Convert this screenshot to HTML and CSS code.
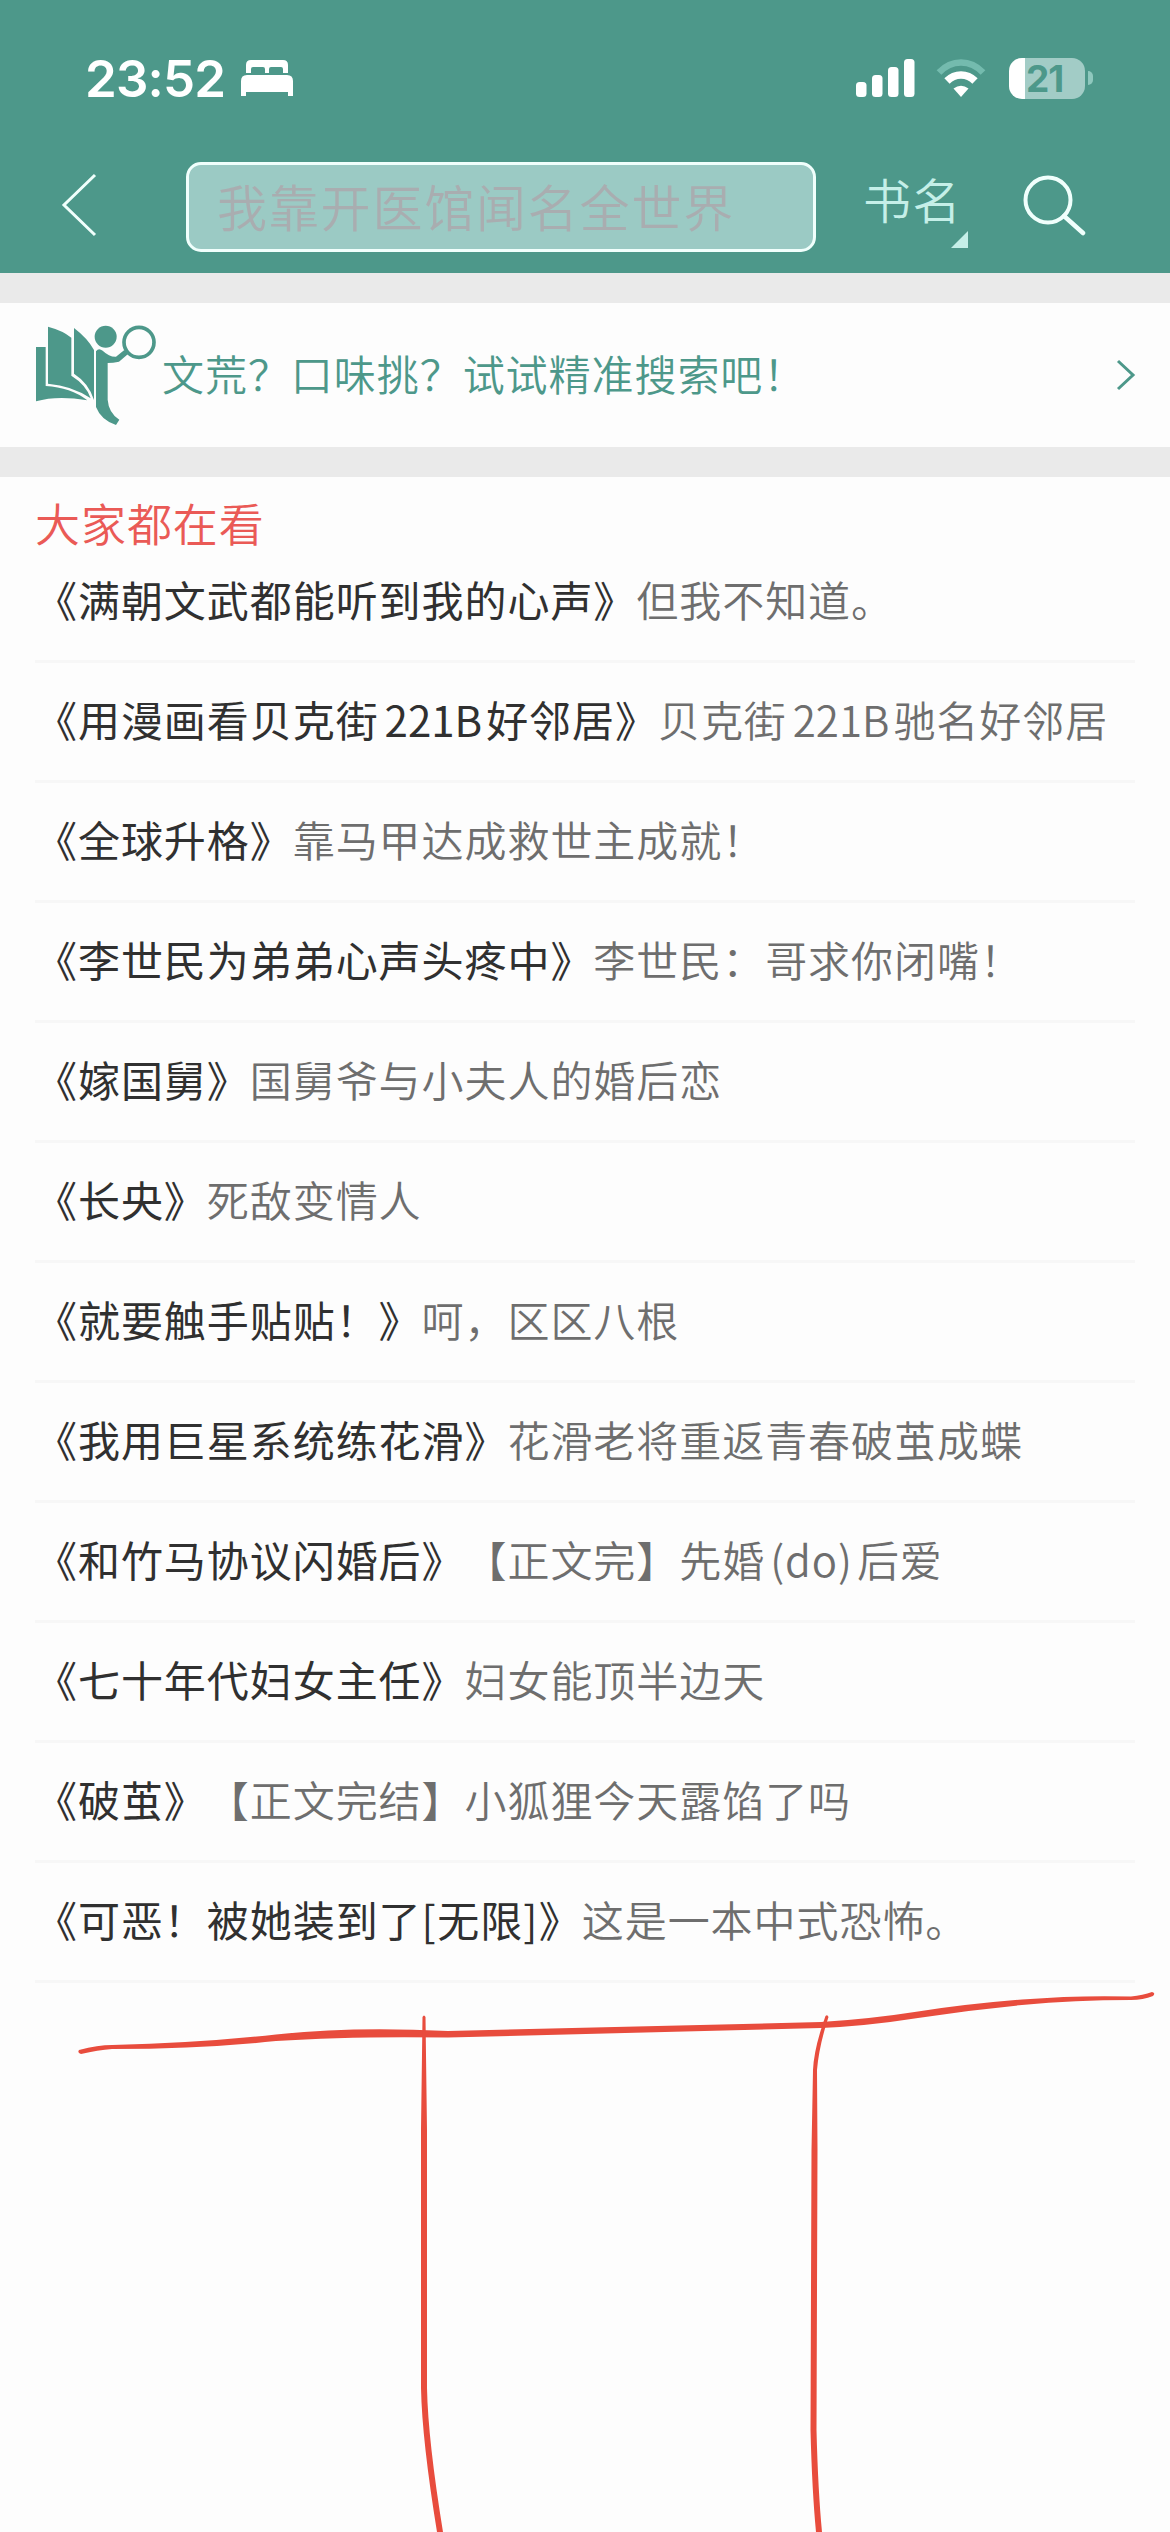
FILE: index.html
```html
<!DOCTYPE html>
<html lang="zh-CN">
<head>
    <meta charset="utf-8">
    <title>搜索</title>
    <link rel="stylesheet" href="styles.css">
</head>
<body>
    <div class="header">
        <div class="status">
            <span class="time">23:52</span>
            <svg class="bed" width="52" height="36" viewBox="0 0 52 36" fill="#fff">
                <path d="M5 13V5q0-5 5-5h32q5 0 5 5v8h-5V9q0-2-2-2H30q-2 0-2 2v4h-4V9q0-2-2-2H12q-2 0-2 2v4z"/>
                <path d="M0 36V21q0-6 6-6h40q6 0 6 6v15h-5v-4H5v4z"/>
            </svg>
            <svg class="signal" width="60" height="38" viewBox="0 0 60 38" fill="#fff">
                <rect x="0" y="23" width="10.500" height="15" rx="3.500"/>
                <rect x="16" y="16" width="10.500" height="22" rx="3.500"/>
                <rect x="32" y="8" width="10.500" height="30" rx="3.500"/>
                <rect x="48" y="0" width="10.500" height="38" rx="3.500"/>
            </svg>
            <svg class="wifi" width="50" height="38" viewBox="0 0 50 38">
                <path d="M3 13.500Q12.500 3.500 25 3.500T47 13.500" fill="none" stroke="#74bbae" stroke-width="6.500"/>
                <path d="M11 22Q17 16 25 16T39 22" fill="none" stroke="#fff" stroke-width="7.500"/>
                <path d="M25 38l-7.500-8.500q7.500-5.500 15 0z" fill="#fff"/>
            </svg>
            <div class="battery"><span>21</span></div>
            <div class="nub"></div>
        </div>
        <div class="nav">
            <svg class="back" width="36" height="64" viewBox="0 0 36 64" fill="none" stroke="#f0fffc" stroke-width="3">
                <path d="M34 2L3 32l31 30"/>
            </svg>
            <div class="search-box">我靠开医馆闻名全世界</div>
            <div class="type">书名</div>
            <svg class="search" width="64" height="62" viewBox="0 0 64 62" fill="none" stroke="#f0fffc" stroke-width="4">
                <ellipse cx="25" cy="26" rx="22.500" ry="22.500"/>
                <path d="M41 42l19 17" stroke-width="4.500" stroke-linecap="round"/>
            </svg>
        </div>
    </div>

    <div class="promo">
        <svg width="120" height="100" viewBox="108 75 360 300" fill="#4d988a">
            <path d="M108 141h29v117q75 4 125 43q-90-16-154 3z"/>
            <path d="M144 80q45 12 70 33v114q45 28 58 68q-55-38-128-44z"/>
            <path d="M222 84q40 30 60 66v150q-15-50-60-79z"/>
            <circle cx="317" cy="110" r="33"/>
            <path d="M288 154q8-12 20-2 20 19 40 18l25-20 12 11-28 24q-18 4-34 4v110q3 40 35 60l-10 16q-45-15-60-54z"/>
            <circle cx="417" cy="127" r="45" fill="none" stroke="#4d988a" stroke-width="11"/>
        </svg>
        <span class="promo-text">文荒？口味挑？试试精准搜索吧！</span>
        <svg class="arrow" width="20" height="32" viewBox="0 0 20 32" fill="none" stroke="#4d988a" stroke-width="3">
            <path d="M2 2l15 14L2 30"/>
        </svg>
    </div>

    <div class="hot">
        <h2>大家都在看</h2>
        <div class="row"><b>《满朝文武都能听到我的心声》</b>但我不知道。</div>
        <div class="row"><b>《用漫画看贝克街<i>221B</i>好邻居》</b>贝克街<i>221B</i>驰名好邻居</div>
        <div class="row"><b>《全球升格》</b>靠马甲达成救世主成就！</div>
        <div class="row"><b>《李世民为弟弟心声头疼中》</b>李世民：哥求你闭嘴！</div>
        <div class="row"><b>《嫁国舅》</b>国舅爷与小夫人的婚后恋</div>
        <div class="row"><b>《长央》</b>死敌变情人</div>
        <div class="row"><b>《就要触手贴贴！》</b>呵，区区八根</div>
        <div class="row"><b>《我用巨星系统练花滑》</b>花滑老将重返青春破茧成蝶</div>
        <div class="row"><b>《和竹马协议闪婚后》</b>【正文完】先婚<i class="paren">(do)</i>后爱</div>
        <div class="row"><b>《七十年代妇女主任》</b>妇女能顶半边天</div>
        <div class="row"><b>《破茧》</b>【正文完结】小狐狸今天露馅了吗</div>
        <div class="row"><b>《可恶！被她装到了<em>[</em>无限<em>]</em>》</b>这是一本中式恐怖。</div>
    </div>

    <!-- hand-drawn marker lines -->
    <svg class="marks" width="1170" height="552" viewBox="0 1980 1170 552" fill="#e84c3d">
        <path d="M79 2050Q98 2045 112 2045Q200 2043 276 2034.500T448 2031L821 2022Q870 2019 918 2011.500T1022 1999.500T1131 1996.500Q1143 1995 1152 1992q4 1 1 4Q1143 2000 1131 2000Q1075 2000 1022 2005T918 2018T821 2028L448 2037.500Q350 2036 276 2041Q200 2049 112 2049Q98 2050 81 2054q-4-1-2-4z"/>
        <path d="M422.500 2017q1.500-3 3 0L427 2130V2388Q428 2440 443 2532h-6Q422 2440 421 2388V2130z"/>
        <path d="M825.500 2016q2-2 3 1Q819 2046 817 2070L817.500 2150L816.500 2430Q818 2490 822 2532h-6Q812 2490 810.500 2430L811.500 2150L813 2070Q814 2048 825.500 2016z"/>
    </svg>
</body>
</html>
```
FILE: styles.css
```css
* {
    box-sizing: border-box;
}

body {
    margin: 0;
    width: 1170px;
    height: 2532px;
    position: relative;
    overflow: hidden;
    background: #fdfdfd;
    font-family: "Noto Sans CJK SC", sans-serif;
    font-weight: 350;
    font-size: 42px;
    letter-spacing: 0.95px;
    text-spacing-trim: space-all;
    white-space: nowrap;
}

svg {
    display: block;
    flex: none;
}

.header {
    height: 273px;
    background: #4d988a;
}

.status {
    display: flex;
    align-items: center;
    height: 156px;
    padding-left: 85px;
}

.time {
    width: 156px;
    font-family: Inter, sans-serif;
    font-size: 51px;
    font-weight: 600;
    letter-spacing: -0.8px;
    color: #fff;
}

.signal {
    margin-left: 563px;
}

.wifi {
    margin-left: 20px;
}

.battery {
    width: 76px;
    height: 41px;
    margin-left: 23px;
    padding-left: 17px;
    border-radius: 13px;
    background: linear-gradient(90deg, #fff 16px, #a2ccc6 16px);
    font-family: Inter, sans-serif;
    font-size: 37px;
    line-height: 41px;
    font-weight: 700;
    letter-spacing: -1px;
    color: #4d988a;
}

.nub {
    width: 5px;
    height: 14px;
    margin-left: 3px;
    border-radius: 0 5px 5px 0;
    background: #8fc8be;
}

.nav {
    display: flex;
    padding: 6px 0 0 61px;
}

.back {
    margin-top: 11px;
}

.search-box {
    width: 630px;
    height: 90px;
    margin-left: 89px;
    padding-left: 28px;
    border: 3px solid #f0fffc;
    border-radius: 15px;
    background: #9bcac4;
    font-size: 50px;
    line-height: 80px;
    letter-spacing: 1.8px;
    color: #a9adb0;
}

.type {
    position: relative;
    width: 106px;
    height: 86px;
    margin-left: 46px;
    padding-left: 1px;
    font-size: 48px;
    line-height: 72px;
    letter-spacing: 1.5px;
    color: #c5efe8;
}

.type::after {
    content: "";
    position: absolute;
    right: 0;
    bottom: 0;
    border-left: 17px solid transparent;
    border-bottom: 17px solid #c5efe8;
}

.search {
    margin: 12px 0 0 55px;
}

.promo {
    display: flex;
    align-items: center;
    height: 204px;
    padding: 0 34px 0 36px;
    border-top: 30px solid #eaeaea;
    border-bottom: 30px solid #eaeaea;
    color: #4d988a;
}

.promo-text {
    flex: 1;
    margin: -6px 0 0 6px;
}

.hot {
    padding: 30px 35px 0;
    color: #6e6e6e;
}

.hot h2 {
    margin: 0;
    height: 36px;
    font-size: 45px;
    font-weight: 350;
    line-height: 32px;
    color: #ea5a56;
}

.row {
    height: 120px;
    line-height: 112px;
    border-bottom: 3px solid #f7f7f7;
}

.row b {
    font-weight: 400;
    color: #303030;
}

.row i {
    margin: 0 4px 0 6px;
    font-style: normal;
    letter-spacing: 0;
}

.row .paren {
    margin-left: 5px;
    letter-spacing: 0.95px;
}

.row em {
    margin-right: 0.5px;
    font-style: normal;
}

.marks {
    position: absolute;
    left: 0;
    bottom: 0;
}
```
